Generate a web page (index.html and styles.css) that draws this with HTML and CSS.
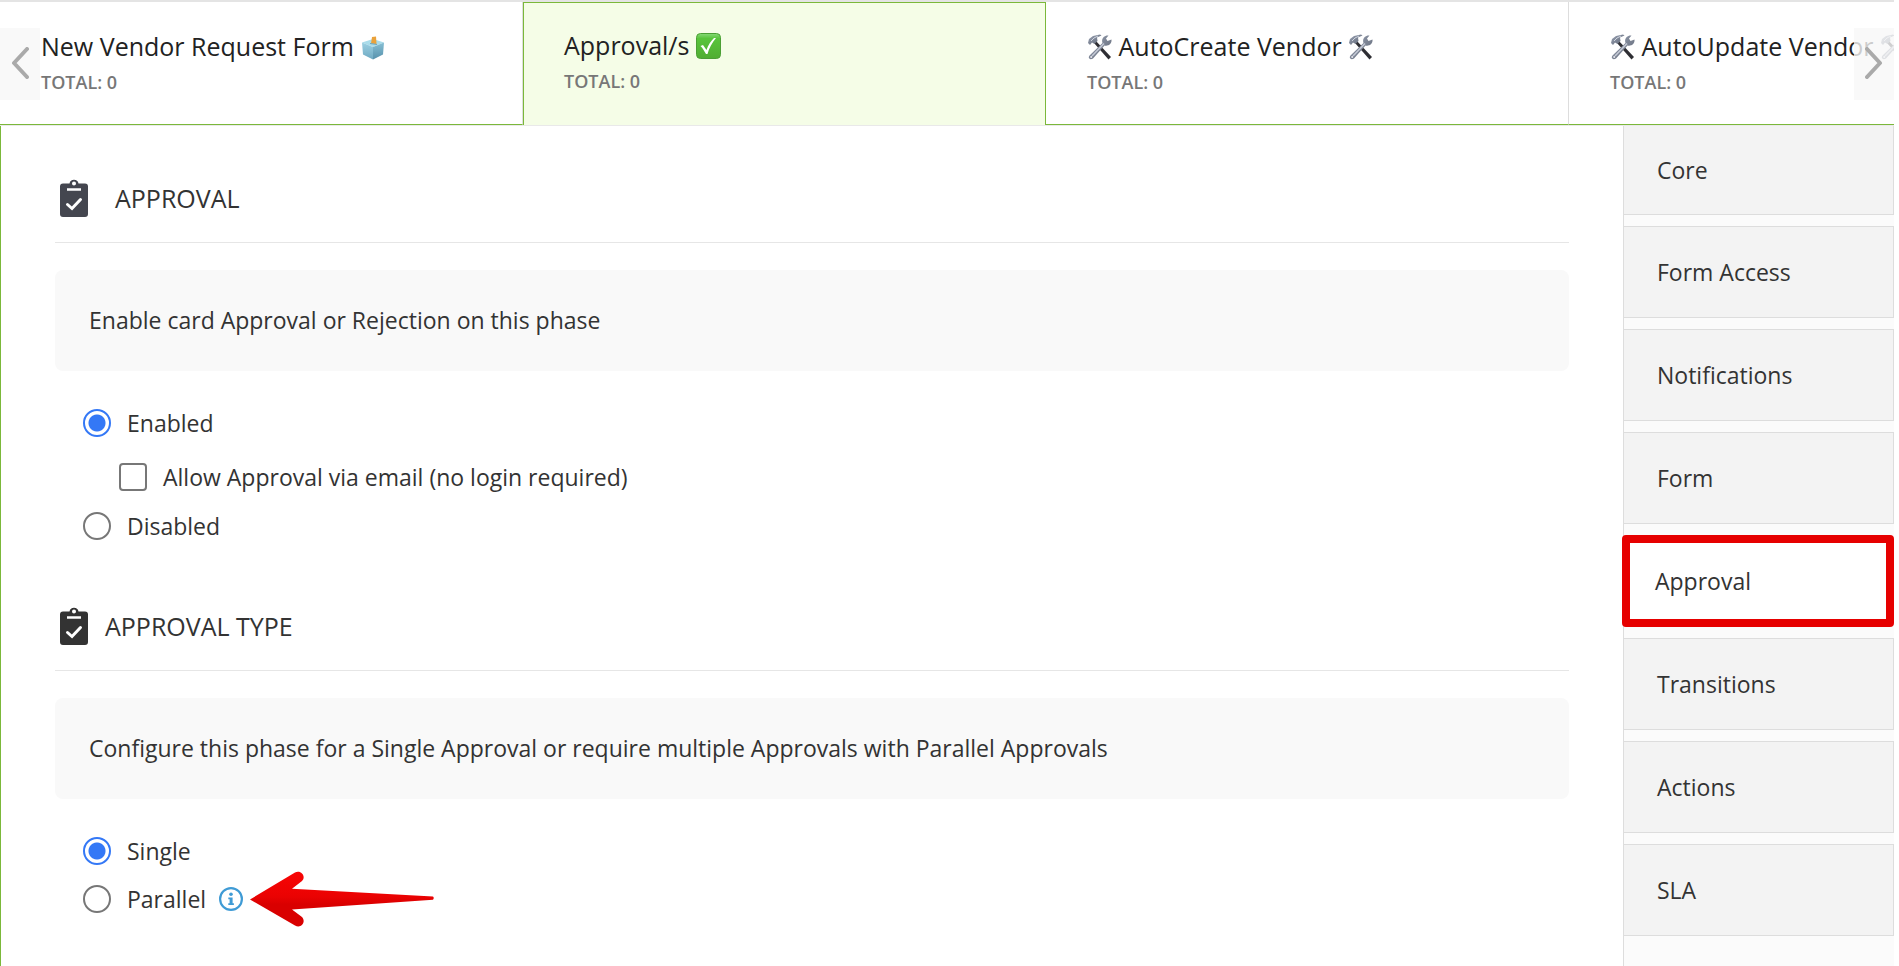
FILE: index.html
```
<!DOCTYPE html>
<html lang="en">
<head>
<meta charset="utf-8">
<title>Phase settings</title>
<link rel="stylesheet" href="styles.css">
</head>
<body>
<svg class="defs" aria-hidden="true">
  <defs>
    <linearGradient id="metal" x1="0" y1="0" x2="1" y2="1">
      <stop offset="0" stop-color="#9aa3b5"/><stop offset="1" stop-color="#5f6674"/>
    </linearGradient>
    <linearGradient id="red" x1="0" y1="0" x2="0" y2="1">
      <stop offset="0" stop-color="#f80505"/><stop offset="0.45" stop-color="#ea0202"/><stop offset="0.6" stop-color="#d90000"/><stop offset="1" stop-color="#d90000"/>
    </linearGradient>
    <linearGradient id="green" x1="0" y1="0" x2="0" y2="1">
      <stop offset="0" stop-color="#86d977"/><stop offset="0.2" stop-color="#58c43b"/><stop offset="1" stop-color="#51ad33"/>
    </linearGradient>
    <linearGradient id="boxLeft" x1="0" y1="0" x2="0" y2="1">
      <stop offset="0" stop-color="#9bd0e2"/><stop offset="1" stop-color="#6fa9c2"/>
    </linearGradient>
    <linearGradient id="boxRight" x1="0" y1="0" x2="0" y2="1">
      <stop offset="0" stop-color="#86bfd4"/><stop offset="1" stop-color="#5791ac"/>
    </linearGradient>
    <symbol id="tools" viewBox="0 0 25 26">
      <path d="M8 6 24 23 21.500 25.500 7 9Z" fill="#2e2e33"/>
      <path d="M1 9 2 5 6 2 13 0.500 14.500 1.500 10 3.500 10.500 7 7.500 10 5 8.500 3 11Z" fill="url(#metal)"/>
      <path d="M4 7 7 4 11 2" stroke="#cfd5e0" fill="none"/>
      <path d="M2.500 21.500 15.500 9C14 5 17 1 21.500 1.500L19 4.500 20.500 7 24.500 5.500C25 10 21 12.500 17.500 11.500L6 24.500C3 26.500 0.500 24 2.500 21.500Z" fill="url(#metal)"/>
      <path d="M5 22 17 9.500" stroke="#c5cad6" stroke-width="1.500"/>
      <circle cx="4.200" cy="23" r="1" fill="#e8e8ee"/>
    </symbol>
    <symbol id="clipboard" viewBox="0 0 28 38">
      <path fill-rule="evenodd" fill="currentColor" d="M3 4.500H9.500A4.600 4.600 0 0 1 18.500 4.500H25A3 3 0 0 1 28 7.500V35A3 3 0 0 1 25 38H3A3 3 0 0 1 0 35V7.500A3 3 0 0 1 3 4.500ZM14 2.500A2 2 0 1 0 14 6.500 2 2 0 1 0 14 2.500ZM7 9.300V11.800H21V9.300Z"/>
      <path d="M7.500 25.500 12 29.500 20.500 20.500" fill="none" stroke="#fff" stroke-width="3" stroke-linecap="round"/>
    </symbol>
  </defs>
</svg>
<div class="page">
  <header class="tabs">
    <div class="track">
      <button class="tab first" type="button">
        <span class="title">New Vendor Request Form
          <svg class="ballot" viewBox="0 0 22 24" aria-hidden="true">
            <path d="M0 6.500 11 3 22 6.500 11 11Z" fill="#a9dcea"/>
            <path d="M0 6.500 11 11V23.500L1 18.500Z" fill="url(#boxLeft)"/>
            <path d="M22 6.500 11 11V23.500L21 18.500Z" fill="url(#boxRight)"/>
            <path d="M10 1 14 0.500 14.500 8 9 7.500Z" fill="#eaa23a"/>
            <path d="M8 7.500 15 8.500" stroke="#6aa3ba"/>
          </svg></span>
        <span class="total">TOTAL: 0</span>
      </button>
      <button class="tab active" type="button">
        <span class="title">Approval/s
          <svg class="check" viewBox="0 0 25 26" aria-hidden="true">
            <rect x="0.500" y="0.500" width="24" height="25" rx="4" fill="url(#green)" stroke="#4b9f35"/>
            <path d="M4.500 13 7 12 10.500 17C12 12 15 8 18 5H20C16 10 13 15 11.500 21H10C8 18 7 15 4.500 13Z" fill="#fff"/>
          </svg></span>
        <span class="total">TOTAL: 0</span>
      </button>
      <button class="tab" type="button">
        <span class="title"><svg class="tools" aria-hidden="true"><use href="#tools"/></svg> AutoCreate Vendor <svg class="tools" aria-hidden="true"><use href="#tools"/></svg></span>
        <span class="total">TOTAL: 0</span>
      </button>
      <button class="tab" type="button">
        <span class="title"><svg class="tools" aria-hidden="true"><use href="#tools"/></svg> AutoUpdate Vendor <svg class="tools" aria-hidden="true"><use href="#tools"/></svg></span>
        <span class="total">TOTAL: 0</span>
      </button>
    </div>
    <button class="scroll prev" type="button" aria-label="Previous phases">
      <svg viewBox="0 0 18 32" aria-hidden="true"><path d="M16 2 3 16 16 30"/></svg>
    </button>
    <button class="scroll next" type="button" aria-label="Next phases">
      <svg viewBox="0 0 18 32" aria-hidden="true"><path d="M2 2 15 16 2 30"/></svg>
    </button>
  </header>
  <div class="body">
    <main class="content">
      <section>
        <h2 class="heading wide"><svg class="clip slate" aria-hidden="true"><use href="#clipboard"/></svg>APPROVAL</h2>
        <p class="note">Enable card Approval or Rejection on this phase</p>
        <div class="options">
          <label class="option"><input type="radio" name="approval" checked>Enabled</label>
          <label class="option nested"><input type="checkbox">Allow Approval via email (no login required)</label>
          <label class="option"><input type="radio" name="approval">Disabled</label>
        </div>
      </section>
      <section>
        <h2 class="heading"><svg class="clip" aria-hidden="true"><use href="#clipboard"/></svg>APPROVAL TYPE</h2>
        <p class="note">Configure this phase for a Single Approval or require multiple Approvals with Parallel Approvals</p>
        <div class="options">
          <label class="option"><input type="radio" name="type" checked>Single</label>
          <div class="row">
            <label class="option"><input type="radio" name="type">Parallel</label>
            <svg class="info" viewBox="0 0 24 24" aria-hidden="true">
              <circle cx="12" cy="12" r="10.900" fill="none" stroke="#3f9bd5" stroke-width="2.200"/>
              <circle cx="12" cy="7.300" r="1.800" fill="#3f9bd5"/>
              <path d="M9.300 10.500H13.600V16.200H14.900V18H9.300V16.200H10.600V12.300H9.300Z" fill="#3f9bd5"/>
            </svg>
            <svg class="arrow" viewBox="0 0 184 56" aria-hidden="true">
              <path d="M0 28.500 45 1.500C51 -1.500 56.500 5.500 52 10L42 17.800 183 25.500Q184.500 27 183 28.800L42 38.500 52 46C56.500 51 51 58 45 54.500Z" fill="url(#red)"/>
            </svg>
          </div>
        </div>
      </section>
    </main>
    <nav class="side">
      <button class="item top" type="button">Core</button>
      <button class="item" type="button">Form Access</button>
      <button class="item" type="button">Notifications</button>
      <button class="item" type="button">Form</button>
      <button class="item current" type="button">Approval</button>
      <button class="item" type="button">Transitions</button>
      <button class="item" type="button">Actions</button>
      <button class="item" type="button">SLA</button>
    </nav>
  </div>
</div>
</body>
</html>
```
FILE: styles.css
```
* { box-sizing: border-box; }

body {
  margin: 0;
  background: #fff;
  color: #333;
  font: 23px/32px "Open Sans", "Noto Sans", sans-serif;
}

button {
  margin: 0;
  padding: 0;
  border: 0;
  background: none;
  color: inherit;
  font: inherit;
  text-align: left;
}

.defs { position: absolute; width: 0; height: 0; }

.page {
  display: flex;
  flex-direction: column;
  min-height: 100vh;
  margin-right: 5px;
}

.tabs {
  position: relative;
  border-top: 2px solid #e4e4e4;
  border-bottom: 1px solid #e9e9e9;
}

.track { display: flex; overflow: hidden; }

.tab {
  display: flex;
  flex: none;
  flex-direction: column;
  gap: 4px;
  width: 523px;
  height: 123px;
  padding: 28px 0 0 41px;
  border-right: 1px solid #ddd;
  border-bottom: 1px solid #7bb83a;
  color: #222;
  white-space: nowrap;
}

.tab.active {
  padding: 26px 0 0 40px;
  border: 1px solid #7bb83a;
  border-bottom: 0;
  background: #f5fde7;
}

.title { display: block; font-size: 25px; }

.total {
  color: #777;
  font-size: 18px;
  font-weight: 600;
  line-height: 32px;
}

.title svg { width: 25px; height: 26px; vertical-align: -4px; }
.title .ballot { width: 22px; height: 24px; margin-left: 2px; vertical-align: -4px; }

.scroll {
  position: absolute;
  top: 26px;
  display: flex;
  align-items: center;
  justify-content: center;
  width: 40px;
  height: 72px;
  padding-bottom: 3px;
  background: rgba(248, 248, 248, 0.8);
}

.prev { left: 0; }
.next { right: 0; }

.scroll svg {
  width: 18px;
  height: 32px;
  fill: none;
  stroke: #aaa;
  stroke-width: 4;
  stroke-linecap: round;
  stroke-linejoin: round;
}

.body { display: flex; flex: 1; }

.content {
  display: flex;
  flex: 1;
  flex-direction: column;
  gap: 60px;
  padding: 48px 54px 0;
  border-left: 1px solid #7bb83a;
}

.heading {
  display: flex;
  align-items: center;
  gap: 17px;
  height: 69px;
  margin: 0 0 27px;
  padding: 0 0 20px 5px;
  border-bottom: 1px solid #e6e6e6;
  font-size: 25px;
  font-weight: 400;
}

.heading.wide { gap: 27px; }

.clip { width: 28px; height: 38px; color: #333; }
.clip.slate { color: #44464f; }

.note {
  margin: 0 0 36px;
  padding: 34px;
  border-radius: 8px;
  background: #f9f9f9;
  line-height: 33px;
}

.options {
  display: flex;
  flex-direction: column;
  gap: 16px;
  padding-left: 28px;
}

.option { display: flex; align-items: center; gap: 16px; }
.option.nested { padding: 6px 0 1px 36px; }

.option input {
  flex: none;
  width: 28px;
  height: 28px;
  margin: 0;
  border: 2px solid #777;
  background: #fff;
  appearance: none;
}

.option input[type="checkbox"] { border-radius: 4px; }
.option input[type="radio"] { border-radius: 50%; }

.option input:checked {
  border-color: #3478f6;
  background: radial-gradient(circle, #3478f6 8px, #fff 9px);
}

.row { display: flex; align-items: center; }
.info { width: 24px; height: 24px; margin-left: 13px; overflow: visible; }
.arrow { width: 184px; height: 56px; margin: -12px 0 -12px 7px; }

.side {
  display: flex;
  flex-direction: column;
  flex: none;
  gap: 11px;
  width: 271px;
  border-left: 1px solid #ddd;
  background: #fbfbfb;
}

.item {
  height: 92px;
  padding-left: 33px;
  border: 1px solid #ddd;
  border-left: 0;
  background: #f3f3f3;
}

.item.top { height: 89px; border-top: 0; }

.item.current {
  margin-left: -2px;
  padding-left: 25px;
  border: 8px solid #e60000;
  border-radius: 4px;
  background: #fff;
}
```
